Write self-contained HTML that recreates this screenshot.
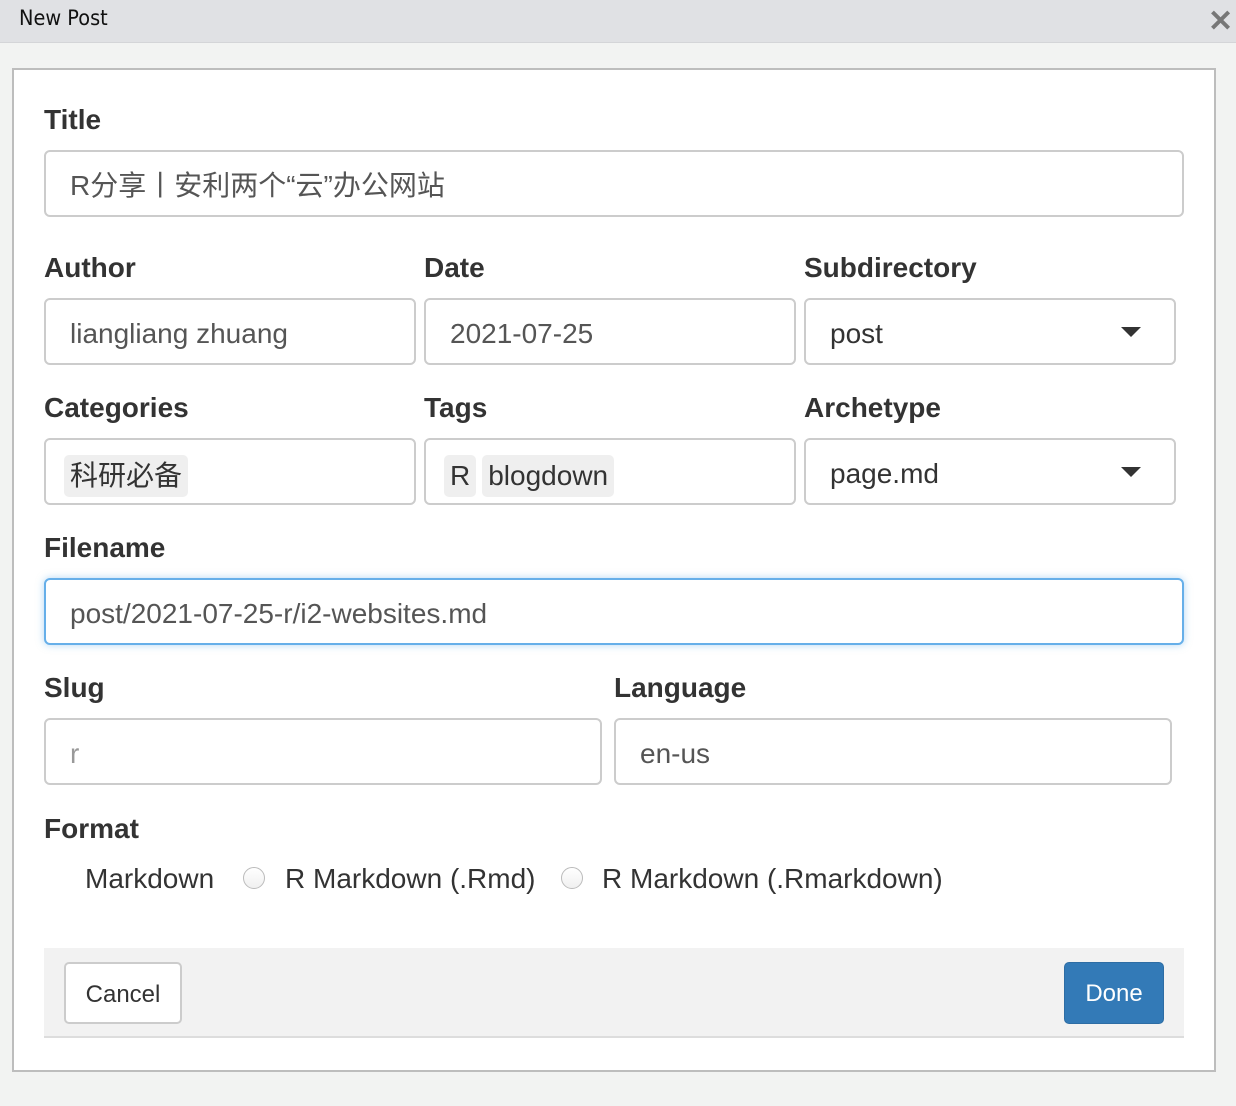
<!DOCTYPE html>
<html><head><meta charset="utf-8"><style>
*{box-sizing:border-box;margin:0;padding:0}
body{width:1236px;height:1106px;background:#f2f3f2;font-family:"Liberation Sans","Noto Sans CJK SC",sans-serif;position:relative;overflow:hidden;color:#333}
.hdr{position:absolute;left:0;top:0;width:1236px;height:43px;background:#e0e1e4;border-bottom:1px solid #d4d5d8}
.hdr .t{position:absolute;left:19px;top:6px;font-family:"DejaVu Sans",sans-serif;font-size:21px;color:#111;transform:scaleX(.92);transform-origin:left}
.hdr .x{position:absolute;left:1208px;top:4px;font-size:30px;color:#777;font-weight:bold}
.panel{position:absolute;left:12px;top:68px;width:1204px;height:1004px;background:#fff;border:2px solid #bdbdbd}
.lbl{position:absolute;font-weight:bold;font-size:28px;color:#333;line-height:30px}
.in{position:absolute;height:67px;border:2px solid #ccc;border-radius:6px;background:#fff;font-size:28px;color:#555;line-height:67px;padding-left:24px;white-space:nowrap}
.tag{display:inline-block;background:#efefef;border-radius:5px;padding:0 6px;line-height:42px;margin-right:6px;color:#333;vertical-align:middle}
.caret{position:absolute;right:33px;top:27px;width:0;height:0;border-left:10px solid transparent;border-right:10px solid transparent;border-top:10px solid #333}
.radio{position:absolute;width:22px;height:22px;border-radius:50%;border:1px solid #bbb;background:linear-gradient(#fff,#f0f0f0)}
.opt{position:absolute;font-size:28px;color:#333;line-height:30px}
.btn{position:absolute;height:62px;border-radius:5px;font-size:24px;text-align:center;line-height:62px}
</style></head><body>
<div class="hdr"><div class="t">New Post</div><div class="x">✕</div></div>
<div class="panel"></div>

<div class="lbl" style="left:44px;top:105px">Title</div>
<div class="in" style="left:44px;top:150px;width:1140px">R分享丨安利两个“云”办公网站</div>

<div class="lbl" style="left:44px;top:253px">Author</div>
<div class="lbl" style="left:424px;top:253px">Date</div>
<div class="lbl" style="left:804px;top:253px">Subdirectory</div>
<div class="in" style="left:44px;top:298px;width:372px">liangliang zhuang</div>
<div class="in" style="left:424px;top:298px;width:372px">2021-07-25</div>
<div class="in" style="left:804px;top:298px;width:372px;color:#333">post<div class="caret"></div></div>

<div class="lbl" style="left:44px;top:393px">Categories</div>
<div class="lbl" style="left:424px;top:393px">Tags</div>
<div class="lbl" style="left:804px;top:393px">Archetype</div>
<div class="in" style="left:44px;top:438px;width:372px;padding-left:18px"><span class="tag">科研必备</span></div>
<div class="in" style="left:424px;top:438px;width:372px;padding-left:18px"><span class="tag">R</span><span class="tag">blogdown</span></div>
<div class="in" style="left:804px;top:438px;width:372px;color:#333">page.md<div class="caret"></div></div>

<div class="lbl" style="left:44px;top:533px">Filename</div>
<div class="in" style="left:44px;top:578px;width:1140px;border-color:#66afe9;box-shadow:0 0 8px rgba(102,175,233,.5)">post/2021-07-25-r/i2-websites.md</div>

<div class="lbl" style="left:44px;top:673px">Slug</div>
<div class="lbl" style="left:614px;top:673px">Language</div>
<div class="in" style="left:44px;top:718px;width:558px;color:#999">r</div>
<div class="in" style="left:614px;top:718px;width:558px">en-us</div>

<div class="lbl" style="left:44px;top:814px">Format</div>
<div class="opt" style="left:85px;top:864px">Markdown</div>
<div class="radio" style="left:243px;top:867px"></div>
<div class="opt" style="left:285px;top:864px">R Markdown (.Rmd)</div>
<div class="radio" style="left:561px;top:867px"></div>
<div class="opt" style="left:602px;top:864px">R Markdown (.Rmarkdown)</div>

<div style="position:absolute;left:44px;top:948px;width:1140px;height:90px;background:#f2f2f2;border-bottom:2px solid #ddd"></div>
<div class="btn" style="left:64px;top:962px;width:118px;background:#fff;border:2px solid #ccc;color:#333">Cancel</div>
<div class="btn" style="left:1064px;top:962px;width:100px;background:#337ab7;border:1px solid #2e6da4;color:#fff">Done</div>
</body></html>
